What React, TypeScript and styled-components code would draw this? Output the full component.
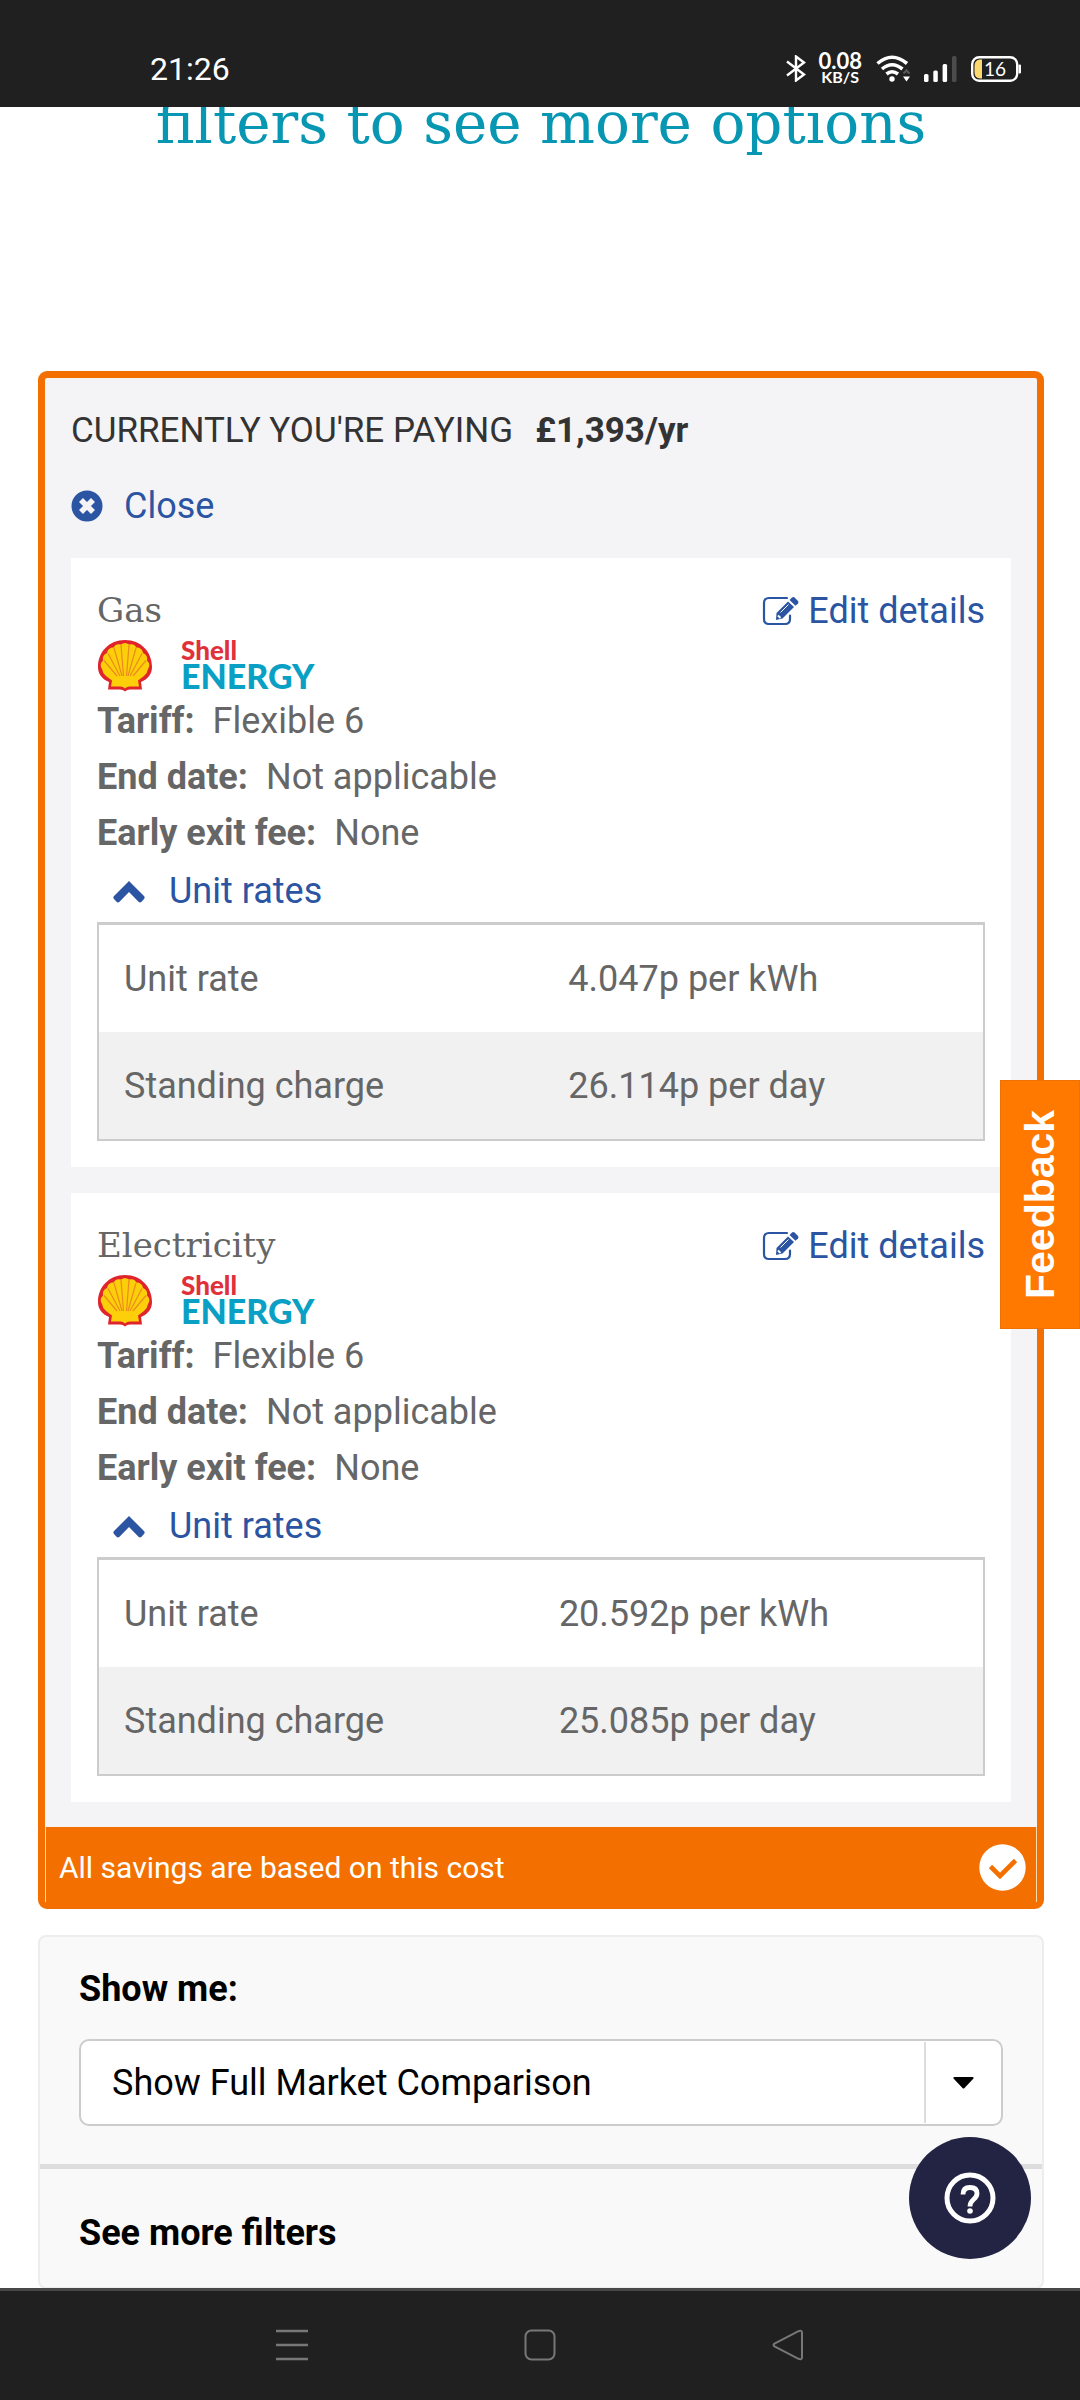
import React from "react";
import styled, { createGlobalStyle } from "styled-components";

const sans = `Roboto, "Liberation Sans", sans-serif`;
const slab = `"DejaVu Serif", "Liberation Serif", serif`;

const GlobalStyle = createGlobalStyle`
  *, *::before, *::after { box-sizing: border-box; }
  body { margin: 0; background: #fff; }
  button, select { font: inherit; color: inherit; }
  button { margin: 0; padding: 0; border: 0; background: none; cursor: pointer; }
`;

const Screen = styled.div`
  position: relative;
  display: flex;
  flex-direction: column;
  height: 100vh;
  overflow: hidden;
  font: 400 36px/56px ${sans};
  color: #666;
`;

const StatusBar = styled.header`
  flex: none;
  display: flex;
  justify-content: space-between;
  align-items: center;
  height: 107px;
  padding: 30px 58px 0 150px;
  background: #202020;
  color: #fff;
`;

const Clock = styled.time`
  font-size: 32px;
  line-height: 40px;
`;

const StatusIcons = styled.div`
  display: flex;
  align-items: center;
`;

const Speed = styled.div`
  display: flex;
  flex-direction: column;
  align-items: center;
  margin: 0 14px 0 12px;
  font: 700 22px/16px Lato, ${sans};
`;

const SpeedUnit = styled.span`
  font-size: 16px;
`;

const BatteryShell = styled.div`
  position: relative;
  display: flex;
  margin-left: 13px;
`;

const BatteryLevel = styled.span`
  position: absolute;
  inset: 0 3px 0 0;
  text-align: center;
  font: 400 19px/26px Lato, ${sans};
`;

const Main = styled.main`
  flex: 1;
  min-height: 0;
  overflow: hidden;
  padding: 0 36px 0 38px;
`;

const PageTitle = styled.h1`
  margin: -20px 0 212px;
  text-align: center;
  font: 400 58px/72px ${slab};
  color: #0797b3;
`;

const CurrentCard = styled.section`
  border: 7px solid #f37000;
  border-radius: 9px;
  background: #f4f4f7;
`;

const CurrentBody = styled.div`
  display: flex;
  flex-direction: column;
  padding: 25px 26px 25px;
`;

const Paying = styled.p`
  display: flex;
  gap: 22px;
  margin: 0 0 19px;
  font-size: 35px;
  color: #333;
`;

const LinkButton = styled.button`
  display: flex;
  align-items: center;
  align-self: flex-start;
  gap: 21px;
  color: #2b55a2;
`;

const RatesToggle = styled(LinkButton)`
  gap: 24px;
  padding-left: 16px;
  line-height: 61px;
`;

const EditLink = styled.a`
  display: flex;
  align-items: center;
  gap: 9px;
  color: #2b55a2;
  text-decoration: none;
`;

const Fuels = styled.div`
  display: flex;
  flex-direction: column;
  gap: 26px;
  margin-top: 24px;
`;

const FuelPanel = styled.article`
  display: flex;
  flex-direction: column;
  padding: 25px 26px 26px;
  background: #fff;
`;

const FuelHeader = styled.div`
  display: flex;
  justify-content: space-between;
`;

const FuelName = styled.h2`
  margin: 0;
  font: 400 34px/54px ${slab};
`;

const Supplier = styled.div`
  display: flex;
  align-items: flex-start;
  gap: 28px;
  height: 54px;
`;

const Wordmark = styled.div`
  display: flex;
  flex-direction: column;
  font: 900 34px/28px Lato, ${sans};
  color: #0a9fc4;
`;

const WordmarkTop = styled.span`
  font-size: 26px;
  line-height: 23px;
  color: #e0313a;
`;

const Facts = styled.dl`
  margin: 0;
`;

const Fact = styled.div`
  display: flex;
  gap: 18px;
`;

const Term = styled.dt`
  font-weight: 700;
`;

const Value = styled.dd`
  margin: 0;
`;

const RatesTable = styled.table`
  width: 100%;
  border: 2px solid #ccc;
  border-top-width: 3px;
  border-spacing: 0;
`;

const RateRow = styled.tr`
  height: 107px;

  &:nth-child(even) { background: #f1f1f1; }
`;

const RateName = styled.th`
  padding: 0 25px;
  text-align: left;
  font-weight: 400;
`;

const RateValue = styled.td`
  padding: 0 25px;
`;

const SavingsBar = styled.div`
  display: flex;
  justify-content: space-between;
  align-items: center;
  height: 75px;
  padding: 6px 10px 0 13px;
  border: solid #fdd9ae;
  border-width: 0 1px;
  background: #f37000;
  color: #fff;
  font-size: 30px;
`;

const FilterPanel = styled.section`
  margin-top: 26px;
  border: 2px solid #ededed;
  border-radius: 8px;
  background: #f9f9f9;
  color: #000;
`;

const FilterGroup = styled.div`
  display: flex;
  flex-direction: column;
  gap: 22px;
  padding: 24px 39px 38px;
  border-bottom: 5px solid #ddd;
`;

const FilterLabel = styled.label`
  font-weight: 700;
`;

const SelectBox = styled.div`
  position: relative;
  display: flex;
`;

const Select = styled.select`
  flex: 1;
  height: 87px;
  padding: 0 90px 0 31px;
  border: 2px solid #ccc;
  border-radius: 10px;
  background: #fff;
  appearance: none;
`;

const SelectArrow = styled.span`
  position: absolute;
  inset: 3px 2px 3px auto;
  display: flex;
  align-items: center;
  justify-content: center;
  width: 77px;
  border-left: 2px solid #ddd;
  pointer-events: none;
`;

const MoreFilters = styled.button`
  display: block;
  width: 100%;
  padding: 36px 39px 26px;
  text-align: left;
  font-weight: 700;
`;

const NavBar = styled.nav`
  flex: none;
  display: flex;
  justify-content: center;
  align-items: center;
  height: 112px;
  padding: 0 1px 2px 0;
  gap: 216px;
  border-top: 3px solid #484848;
  background: #202020;
`;

const NavButton = styled.button`
  display: flex;
`;

const FeedbackTab = styled.button`
  position: absolute;
  top: 1080px;
  right: 0;
  width: 80px;
  height: 249px;
  border: 1px solid #ee7203;
  background: #ff7900;
  color: #fff;
  font: 700 41px/78px "Liberation Sans", sans-serif;
  writing-mode: vertical-rl;
  transform: rotate(180deg);
`;

const HelpButton = styled.button`
  position: absolute;
  right: 49px;
  bottom: 141px;
  display: flex;
  align-items: center;
  justify-content: center;
  width: 122px;
  height: 122px;
  border-radius: 50%;
  background: #232343;
`;

const BluetoothIcon = () => (
  <svg width="20" height="27" viewBox="0 0 20 27" fill="none" stroke="#fff" strokeWidth="2.4">
    <path d="M1 6.500 18 19.500 10 25.500V1.500L18 7.500 1 20.500" />
  </svg>
);

const WifiIcon = () => (
  <svg width="35" height="27" viewBox="0 0 35 27" fill="none" stroke="#fff" strokeWidth="3.600">
    <path d="M1.500 8.500Q16 -4 31 8.500" />
    <path d="M6 14Q16 5.500 26.500 14" />
    <path d="M10.500 19Q16 14.500 22 19" />
    <circle cx="16" cy="24" r="2.700" fill="#fff" stroke="none" />
    <path d="M27.500 18.500 30.500 15.500 33.500 18.500" stroke="#555" strokeWidth="2.400" />
    <path d="M27 21.500H34L30.500 26.500Z" fill="#fff" stroke="none" />
  </svg>
);

const SignalSvg = styled.svg`
  margin-left: 13px;
`;

const SignalIcon = () => (
  <SignalSvg width="34" height="27" viewBox="0 0 34 27" fill="#fff">
    <rect x="0" y="19" width="4.500" height="8" rx="1.500" />
    <rect x="9.300" y="15.500" width="4.500" height="11.500" rx="1.500" />
    <rect x="18.600" y="9" width="4.500" height="18" rx="1.500" />
    <rect x="28" y="1" width="4.500" height="26" rx="1.500" fill="#4c4c4c" />
  </SignalSvg>
);

const BatteryIcon = () => (
  <svg width="51" height="26" viewBox="0 0 51 26">
    <rect x="1.200" y="1.200" width="45" height="23.600" rx="7" fill="none" stroke="#fff" strokeWidth="2.400" />
    <path d="M9 3.500H11V22.500H9Q3.500 22 3.500 16V10Q3.500 4 9 3.500Z" fill="#fbd870" />
    <rect x="47.500" y="8.500" width="2.500" height="9" rx="1" fill="#fff" />
  </svg>
);

const CloseIcon = () => (
  <svg width="32" height="32" viewBox="0 0 32 32">
    <circle cx="16" cy="16" r="15.500" fill="#2b55a2" />
    <path d="M10 10 22 22M22 10 10 22" stroke="#f4f4f7" strokeWidth="5.600" />
  </svg>
);

const EditIcon = () => (
  <svg width="37" height="30" viewBox="0 0 37 30" fill="none">
    <path d="M25 2H7Q2 2 2 7V23Q2 28 7 28H23Q28 28 28 23V19.500" stroke="#2b55a2" strokeWidth="2.200" strokeLinecap="round" />
    <path d="M14 24 14.500 17 26 5.500 32 11 20.500 22.500Z" fill="#2b55a2" />
    <path d="M27.500 4 30 1.500Q31.300 .5 32.600 1.500L36 5Q37 6.300 36 7.600L33.500 9.800Z" fill="#2b55a2" />
    <path d="M18.500 16.500 26.500 8.500" stroke="#fff" strokeWidth="1" />
    <path d="M16 19.500 18.500 22" stroke="#fff" strokeWidth="1.800" />
  </svg>
);

const ChevronIcon = () => (
  <svg width="32" height="24" viewBox="0 0 32 24" fill="#2b55a2">
    <path d="M16 1 31 16Q32.300 17.500 31 19L28.500 21.800Q27 23 25.500 21.800L16 12 6.500 21.800Q5 23 3.500 21.800L1 19Q-.3 17.500 1 16Z" />
  </svg>
);

const ShellIcon = () => (
  <svg width="56" height="53" viewBox="0 0 56 53">
    <path
      d="M28 1C12 1 1 13 1 28C1 35 5 40 12 43L11 50.500H23Q26 50.500 28 52.500Q30 50.500 33 50.500H45L44 43C51 40 55 35 55 28C55 13 44 1 28 1Z"
      fill="#e0242b"
    />
    <path
      d="M24 5.500Q28 2.500 32 5.500Q37 4 39.500 8.500Q45 8.500 46 14Q51 16 50 21.500Q54 25.500 51 30Q50.500 34 47 37L41 41.500L42 47.500H32.500Q30 47.500 28 49.500Q26 47.500 23.500 47.500H14L15 41.500L9 37Q5.500 34 5 30Q2 25.500 6 21.500Q5 16 10 14Q11 8.500 16.500 8.500Q19 4 24 5.500Z"
      fill="#fccf0a"
    />
    <path
      d="M24 6 26.500 37M32 6 29.500 37M17 9 25 37M39 9 31 37M11 14.500 23 37M45 14.500 33 37M7 21.500 20 37M49 21.500 36 37"
      stroke="#ec8a1c"
      strokeWidth="1.200"
    />
  </svg>
);

const CheckIcon = () => (
  <svg width="47" height="47" viewBox="0 0 47 47">
    <circle cx="23.500" cy="23.500" r="23.200" fill="#fff" />
    <path d="M11.500 22.500 21 32 36.500 16.500" fill="none" stroke="#f37000" strokeWidth="4.600" />
  </svg>
);

const CaretIcon = () => (
  <svg width="21" height="12" viewBox="0 0 21 12">
    <path d="M1.500 0H19.500Q21.500 .5 20 2L11.500 11Q10.500 12 9.500 11L1 2Q-.5 .5 1.500 0Z" fill="#000" />
  </svg>
);

const HelpIcon = () => (
  <svg width="52" height="52" viewBox="0 0 52 52" fill="none" stroke="#fff">
    <circle cx="26" cy="26" r="23" strokeWidth="5" />
    <path d="M19 22.500Q19 15.500 26 15.500Q33 15.500 33 21.500Q33 24.500 29.500 27.500Q26 30.500 26 34.500" strokeWidth="4.800" />
    <circle cx="26" cy="39" r="2.800" fill="#fff" stroke="none" />
  </svg>
);

const fuels = [
  { name: "Gas", unit: "4.047p per kWh", standing: "26.114p per day" },
  { name: "Electricity", unit: "20.592p per kWh", standing: "25.085p per day" },
];

const facts = [
  ["Tariff:", "Flexible 6"],
  ["End date:", "Not applicable"],
  ["Early exit fee:", "None"],
];

type FuelProps = { name: string; unit: string; standing: string };

const Fuel = ({ name, unit, standing }: FuelProps) => (
  <FuelPanel>
    <FuelHeader>
      <FuelName>{name}</FuelName>
      <EditLink href="#edit">
        <EditIcon />
        Edit details
      </EditLink>
    </FuelHeader>
    <Supplier>
      <ShellIcon />
      <Wordmark>
        <WordmarkTop>Shell</WordmarkTop>
        <span>ENERGY</span>
      </Wordmark>
    </Supplier>
    <Facts>
      {facts.map(([term, value]) => (
        <Fact key={term}>
          <Term>{term}</Term>
          <Value>{value}</Value>
        </Fact>
      ))}
    </Facts>
    <RatesToggle type="button" aria-expanded="true">
      <ChevronIcon />
      Unit rates
    </RatesToggle>
    <RatesTable>
      <tbody>
        <RateRow>
          <RateName scope="row">Unit rate</RateName>
          <RateValue>{unit}</RateValue>
        </RateRow>
        <RateRow>
          <RateName scope="row">Standing charge</RateName>
          <RateValue>{standing}</RateValue>
        </RateRow>
      </tbody>
    </RatesTable>
  </FuelPanel>
);

export default function App() {
  return (
    <Screen>
      <GlobalStyle />
      <StatusBar>
        <Clock>21:26</Clock>
        <StatusIcons>
          <BluetoothIcon />
          <Speed>
            <span>0.08</span>
            <SpeedUnit>KB/S</SpeedUnit>
          </Speed>
          <WifiIcon />
          <SignalIcon />
          <BatteryShell>
            <BatteryIcon />
            <BatteryLevel>16</BatteryLevel>
          </BatteryShell>
        </StatusIcons>
      </StatusBar>

      <Main>
        <PageTitle>filters to see more options</PageTitle>

        <CurrentCard>
          <CurrentBody>
            <Paying>
              <span>CURRENTLY YOU'RE PAYING</span>
              <strong>£1,393/yr</strong>
            </Paying>
            <LinkButton type="button">
              <CloseIcon />
              Close
            </LinkButton>
            <Fuels>
              {fuels.map((fuel) => (
                <Fuel key={fuel.name} {...fuel} />
              ))}
            </Fuels>
          </CurrentBody>
          <SavingsBar>
            All savings are based on this cost
            <CheckIcon />
          </SavingsBar>
        </CurrentCard>

        <FilterPanel>
          <FilterGroup>
            <FilterLabel htmlFor="show-me">Show me:</FilterLabel>
            <SelectBox>
              <Select id="show-me">
                <option>Show Full Market Comparison</option>
              </Select>
              <SelectArrow>
                <CaretIcon />
              </SelectArrow>
            </SelectBox>
          </FilterGroup>
          <MoreFilters type="button">See more filters</MoreFilters>
        </FilterPanel>
      </Main>

      <NavBar>
        <NavButton type="button" aria-label="Recent apps">
          <svg width="32" height="32" viewBox="0 0 32 32" stroke="#777" strokeWidth="2.500">
            <path d="M0 2H32M0 16H32M0 30H32" />
          </svg>
        </NavButton>
        <NavButton type="button" aria-label="Home">
          <svg width="32" height="32" viewBox="0 0 32 32" fill="none" stroke="#777" strokeWidth="2">
            <rect x="1.500" y="1.500" width="29" height="29" rx="6" />
          </svg>
        </NavButton>
        <NavButton type="button" aria-label="Back">
          <svg width="32" height="32" viewBox="0 0 32 32" fill="none" stroke="#777" strokeWidth="2">
            <path d="M26.500 2.200 2.500 14.500Q.5 16 2.500 17.500L26.500 29.800Q30 31 30 28.500V3.500Q30 1 26.500 2.200Z" />
          </svg>
        </NavButton>
      </NavBar>

      <FeedbackTab type="button">Feedback</FeedbackTab>
      <HelpButton type="button" aria-label="Help">
        <HelpIcon />
      </HelpButton>
    </Screen>
  );
}
